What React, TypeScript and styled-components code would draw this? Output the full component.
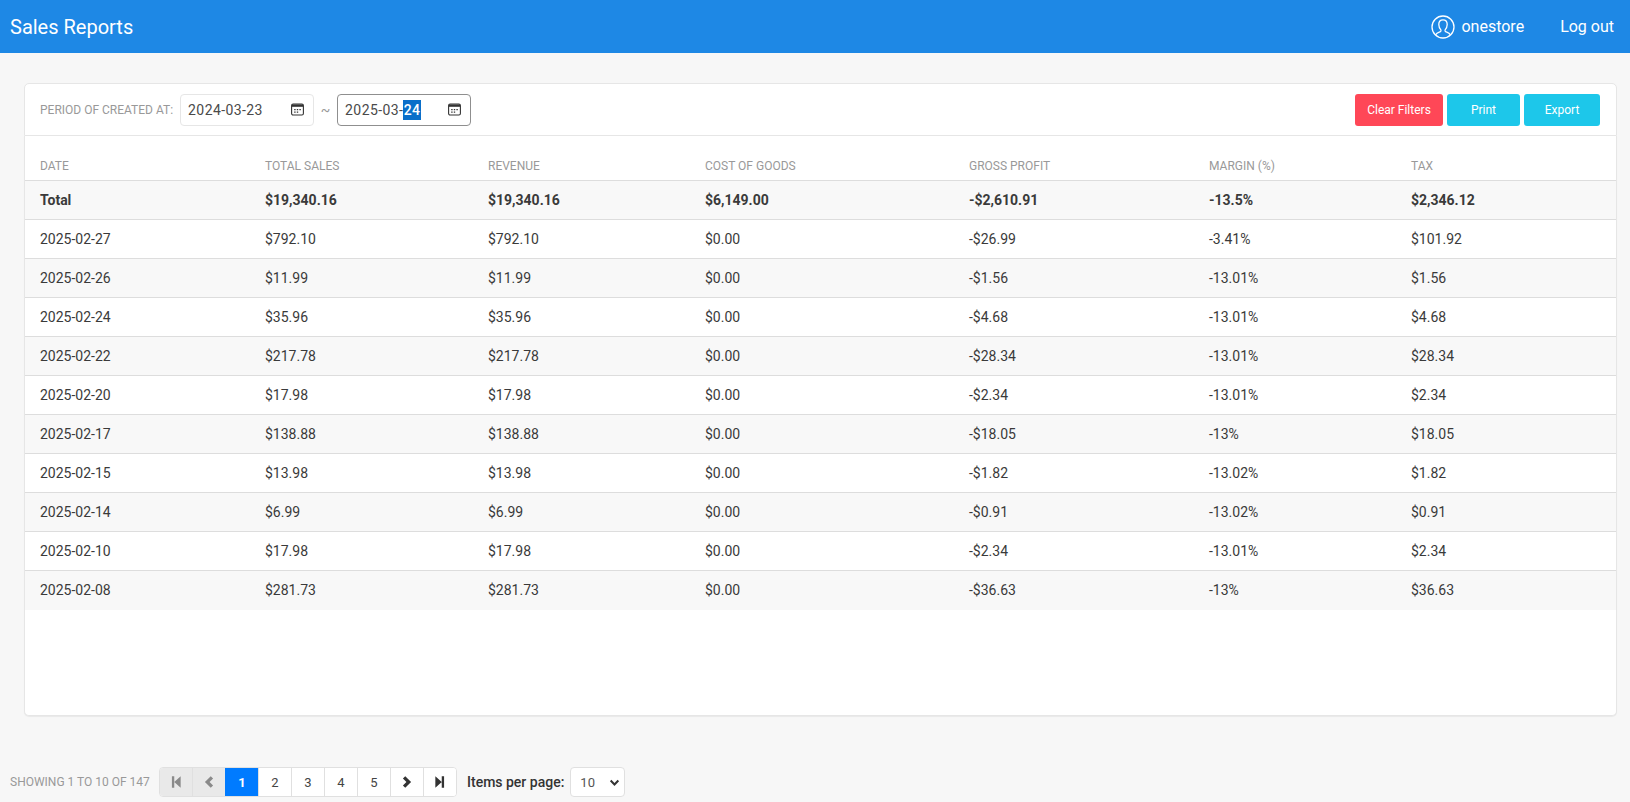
import styled, { createGlobalStyle } from "styled-components";

const GlobalStyle = createGlobalStyle`
  html, body {
    margin: 0;
    padding: 0;
    background: #f7f7f7;
    font-family: Roboto, "Liberation Sans", sans-serif;
    color: #333;
  }
  * {
    box-sizing: border-box;
  }
`;

const TopBar = styled.header`
  height: 53px;
  background: #1e88e5;
  color: #fff;
  display: flex;
  align-items: center;
  justify-content: space-between;
  padding: 0 16px 0 10px;
`;

const Title = styled.h1`
  margin: 0;
  font-size: 20px;
  font-weight: 400;
`;

const UserNav = styled.nav`
  display: flex;
  align-items: center;
  font-size: 16px;
`;

const UserName = styled.span`
  margin-left: 6px;
  margin-right: 36px;
`;

const Main = styled.main`
  padding: 30px 13px 0 24px;
`;

const FilterBar = styled.div`
  height: 53px;
  background: #fff;
  border: 1px solid #e6e6e6;
  border-radius: 5px 5px 0 0;
  display: flex;
  align-items: center;
  padding: 0 16px 0 15px;
`;

const FilterLabel = styled.span`
  font-size: 12px;
  color: #999;
  margin-right: 7px;
`;

const DateField = styled.div<{ $focused?: boolean }>`
  width: 134px;
  height: 32px;
  display: flex;
  align-items: center;
  justify-content: space-between;
  padding: 0 9px 0 7px;
  background: #fff;
  border: 1px solid ${(p) => (p.$focused ? "#8f8f8f" : "#e6e6e6")};
  border-radius: 4px;
  font-size: 14px;
  letter-spacing: 0.4px;
  color: #4a4a4a;
`;

const Selected = styled.span`
  background: #0a6fc9;
  color: #fff;
  font-weight: 500;
  padding: 2px 0.5px;
`;

const Tilde = styled.span`
  width: 23px;
  text-align: center;
  font-size: 14px;
  color: #999;
`;

const Actions = styled.div`
  margin-left: auto;
  display: flex;
  gap: 4px;
`;

const ActionButton = styled.button<{ $width: number; $danger?: boolean }>`
  width: ${(p) => p.$width}px;
  height: 32px;
  border: 0;
  border-radius: 3px;
  background: ${(p) => (p.$danger ? "#ff4757" : "#1dc7ea")};
  color: #fff;
  font-family: inherit;
  font-size: 12px;
  padding: 0;
`;

const TableCard = styled.section`
  height: 580px;
  background: #fff;
  border: 1px solid #e6e6e6;
  border-top: 0;
  border-radius: 0 0 5px 5px;
  box-shadow: 0 1px 1px rgba(0, 0, 0, 0.06);
`;

const Row = styled.div<{ $striped?: boolean; $bold?: boolean; $last?: boolean }>`
  height: 39.05px;
  display: grid;
  grid-template-columns: 225px 223px 217px 264px 240px 202px 1fr;
  align-items: center;
  background: ${(p) => (p.$striped ? "#f8f8f8" : "#fff")};
  border-bottom: ${(p) => (p.$last ? "0" : "1px solid #ddd")};
  font-size: 14px;
  font-weight: ${(p) => (p.$bold ? 700 : 400)};
  color: #3a3a3a;
`;

const HeadRow = styled(Row)`
  height: 44.5px;
  padding-top: 16px;
  font-size: 12px;
  color: #999;
  border-radius: 5px 5px 0 0;
`;

const Cell = styled.div`
  padding-left: 15px;
`;

const Footer = styled.footer`
  margin-top: 51px;
  display: flex;
  align-items: center;
  padding-left: 10px;
`;

const Showing = styled.span`
  width: 149px;
  font-size: 12px;
  color: #999;
  white-space: nowrap;
`;

const Pager = styled.div`
  display: flex;
  height: 30px;
  background: #fff;
  border: 1px solid #e0e0e0;
  border-radius: 4px;
  overflow: hidden;
`;

const PageButton = styled.div<{ $active?: boolean; $disabled?: boolean }>`
  width: 33px;
  display: flex;
  align-items: center;
  justify-content: center;
  font-size: 13px;
  border-left: 1px solid ${(p) => (p.$active ? "#007bff" : "#e0e0e0")};
  background: ${(p) => (p.$active ? "#007bff" : p.$disabled ? "#e9e9e9" : "#fff")};
  color: ${(p) => (p.$active ? "#fff" : p.$disabled ? "#8a8a8a" : "#444")};
  font-weight: ${(p) => (p.$active ? 700 : 400)};
  &:first-child {
    border-left: 0;
    width: 32px;
  }
`;

const PerPageLabel = styled.span`
  margin-left: 10px;
  margin-right: 6px;
  font-size: 14px;
  font-weight: 500;
  color: #333;
`;

const PerPageSelect = styled.div`
  width: 55px;
  height: 30px;
  display: flex;
  align-items: center;
  justify-content: space-between;
  padding: 0 4px 0 9px;
  background: #fff;
  border: 1px solid #e0e0e0;
  border-radius: 4px;
  font-size: 13px;
  color: #555;
`;

const columns = [
  "DATE",
  "TOTAL SALES",
  "REVENUE",
  "COST OF GOODS",
  "GROSS PROFIT",
  "MARGIN (%)",
  "TAX",
];

const rows = [
  ["Total", "$19,340.16", "$19,340.16", "$6,149.00", "-$2,610.91", "-13.5%", "$2,346.12"],
  ["2025-02-27", "$792.10", "$792.10", "$0.00", "-$26.99", "-3.41%", "$101.92"],
  ["2025-02-26", "$11.99", "$11.99", "$0.00", "-$1.56", "-13.01%", "$1.56"],
  ["2025-02-24", "$35.96", "$35.96", "$0.00", "-$4.68", "-13.01%", "$4.68"],
  ["2025-02-22", "$217.78", "$217.78", "$0.00", "-$28.34", "-13.01%", "$28.34"],
  ["2025-02-20", "$17.98", "$17.98", "$0.00", "-$2.34", "-13.01%", "$2.34"],
  ["2025-02-17", "$138.88", "$138.88", "$0.00", "-$18.05", "-13%", "$18.05"],
  ["2025-02-15", "$13.98", "$13.98", "$0.00", "-$1.82", "-13.02%", "$1.82"],
  ["2025-02-14", "$6.99", "$6.99", "$0.00", "-$0.91", "-13.02%", "$0.91"],
  ["2025-02-10", "$17.98", "$17.98", "$0.00", "-$2.34", "-13.01%", "$2.34"],
  ["2025-02-08", "$281.73", "$281.73", "$0.00", "-$36.63", "-13%", "$36.63"],
];

const UserIcon = () => (
  <svg width="24" height="24" viewBox="0 0 24 24" fill="none" stroke="#fff" strokeWidth="1.3">
    <circle cx="12" cy="12" r="11" />
    <path d="M4.5 20c1-2 3-2.6 4.6-3.2.8-.3 1-1 .9-1.7C8.700 13.800 7.800 12 7.800 9.600 7.800 6.700 9.600 4.800 12 4.800s4.200 1.900 4.200 4.800c0 2.400-.9 4.200-2.200 5.500-.1.700.1 1.400.9 1.700 1.600.6 3.600 1.200 4.600 3.200" />
  </svg>
);

const CalendarIcon = () => (
  <svg width="13" height="13" viewBox="0 0 13 13" fill="none">
    <rect x="0.6" y="1" width="11.800" height="11" rx="1.500" stroke="#333" strokeWidth="1.100" />
    <rect x="1" y="1.400" width="11" height="2.400" fill="#333" />
    <path
      d="M3.200 6h1.400v1.300H3.200zM5.800 6h1.400v1.300H5.800zM8.400 6h1.400v1.300H8.400zM3.200 8.500h1.400v1.300H3.200zM5.800 8.500h1.400v1.300H5.800z"
      fill="#333"
    />
  </svg>
);

const PagerIcon = ({ d, color }: { d: string; color: string }) => (
  <svg width="14" height="14" viewBox="0 0 12 12" fill={color}>
    <path d={d} />
  </svg>
);

const firstPath = "M2.500 1h2v10h-2zM10 1v10L4.500 6z";
const prevPath = "M7.500 1l2 2-3 3 3 3-2 2-5-5z";
const nextPath = "M4.500 1l5 5-5 5-2-2 3-3-3-3z";
const lastPath = "M7.500 1h2v10h-2zM2 1v10l5.500-5z";

const App = () => {
  return (
    <>
      <GlobalStyle />
      <TopBar>
        <Title>Sales Reports</Title>
        <UserNav>
          <UserIcon />
          <UserName>onestore</UserName>
          <span>Log out</span>
        </UserNav>
      </TopBar>
      <Main>
        <FilterBar>
          <FilterLabel>PERIOD OF CREATED AT:</FilterLabel>
          <DateField>
            <span>2024-03-23</span>
            <CalendarIcon />
          </DateField>
          <Tilde>~</Tilde>
          <DateField $focused>
            <span>
              2025-03-<Selected>24</Selected>
            </span>
            <CalendarIcon />
          </DateField>
          <Actions>
            <ActionButton $width={88} $danger>
              Clear Filters
            </ActionButton>
            <ActionButton $width={73}>Print</ActionButton>
            <ActionButton $width={76}>Export</ActionButton>
          </Actions>
        </FilterBar>
        <TableCard>
          <HeadRow>
            {columns.map((col) => (
              <Cell key={col}>{col}</Cell>
            ))}
          </HeadRow>
          {rows.map((row, index) => (
            <Row
              key={row[0]}
              $bold={index === 0}
              $striped={index % 2 === 0}
              $last={index === rows.length - 1}
            >
              {row.map((value, i) => (
                <Cell key={i}>{value}</Cell>
              ))}
            </Row>
          ))}
        </TableCard>
      </Main>
      <Footer>
        <Showing>SHOWING 1 TO 10 OF 147</Showing>
        <Pager>
          <PageButton $disabled>
            <PagerIcon d={firstPath} color="#8a8a8a" />
          </PageButton>
          <PageButton $disabled>
            <PagerIcon d={prevPath} color="#8a8a8a" />
          </PageButton>
          <PageButton $active>1</PageButton>
          <PageButton>2</PageButton>
          <PageButton>3</PageButton>
          <PageButton>4</PageButton>
          <PageButton>5</PageButton>
          <PageButton>
            <PagerIcon d={nextPath} color="#333" />
          </PageButton>
          <PageButton>
            <PagerIcon d={lastPath} color="#333" />
          </PageButton>
        </Pager>
        <PerPageLabel>Items per page:</PerPageLabel>
        <PerPageSelect>
          <span>10</span>
          <svg width="11" height="11" viewBox="0 0 10 10" fill="none" stroke="#333" strokeWidth="1.800">
            <path d="M1.500 3.200L5 6.800l3.500-3.600" />
          </svg>
        </PerPageSelect>
      </Footer>
    </>
  );
};

export default App;
